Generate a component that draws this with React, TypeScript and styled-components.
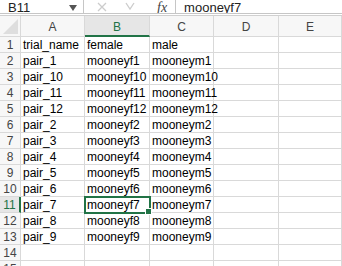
import React from "react"
import styled, { createGlobalStyle } from "styled-components"

const green = "#217346"
const grid = "#d9d9d9"
const font = '"Liberation Sans", Arial, sans-serif'

const Global = createGlobalStyle`
  html, body { margin: 0; padding: 0; background: #fff; }
  body { font-family: ${font}; overflow: hidden; }
`

const Page = styled.div`
  width: 342px;
  height: 266px;
  overflow: hidden;
  background: #fff;
`

// formula bar
const FormulaBar = styled.div`
  display: flex;
  align-items: center;
  height: 13px;
  border-bottom: 1px solid #c6c6c6;
  overflow: hidden;
`
const NameBox = styled.div`
  width: 84px;
  height: 100%;
  display: flex;
  align-items: flex-end;
  justify-content: space-between;
  padding: 0 6px 0 8px;
  box-sizing: border-box;
  border-right: 1px solid #c6c6c6;
  font-size: 13px;
  color: #222;
  line-height: 10px;
`
const Arrow = styled.span`
  width: 0;
  height: 0;
  border-left: 4px solid transparent;
  border-right: 4px solid transparent;
  border-top: 6px solid #555;
  margin-bottom: 2px;
`
const Tools = styled.div`
  display: flex;
  align-items: center;
  padding: 0 8px 0 13px;
  height: 100%;
  border-right: 1px solid #c6c6c6;
`
const ToolIcon = styled.span<{ $gap?: number }>`
  display: flex;
  margin-left: ${(p) => p.$gap ?? 0}px;
`
const Fx = styled.span`
  margin-left: 22px;
  font-family: "Liberation Serif", serif;
  font-style: italic;
  font-size: 14px;
  color: #444;
  line-height: 10px;
  align-self: flex-end;
`
const FormulaText = styled.div`
  padding-left: 8px;
  font-size: 13px;
  line-height: 10px;
  color: #222;
  align-self: flex-end;
`
const Spacer = styled.div`
  height: 1px;
  border-bottom: 1px solid #d0d0d0;
`

// sheet
const Sheet = styled.div`
  display: grid;
  grid-template-columns: 21px 64px 65px 64px 65px 1fr;
  grid-template-rows: 21px;
  grid-auto-rows: 16px;
`
const Corner = styled.div`
  position: relative;
  background: #f7f7f7;
  border-right: 1px solid ${grid};
  border-bottom: 1px solid ${grid};
  overflow: hidden;
  &::after {
    content: "";
    position: absolute;
    right: 2px;
    bottom: 2px;
    border-left: 15px solid transparent;
    border-bottom: 15px solid #dedede;
  }
`
const ColHead = styled.div<{ $active?: boolean }>`
  display: flex;
  align-items: center;
  justify-content: center;
  font-size: 12px;
  padding-top: 2px;
  background: ${(p) => (p.$active ? "#e6e6e6" : "#f7f7f7")};
  color: ${(p) => (p.$active ? green : "#444")};
  border-right: 1px solid ${grid};
  border-bottom: ${(p) => (p.$active ? `2px solid ${green}` : `1px solid ${grid}`)};
`
const RowHead = styled.div<{ $active?: boolean }>`
  display: flex;
  align-items: center;
  justify-content: center;
  font-size: 12px;
  background: ${(p) => (p.$active ? "#e6e6e6" : "#f7f7f7")};
  color: ${(p) => (p.$active ? green : "#444")};
  border-right: ${(p) => (p.$active ? `2px solid ${green}` : `1px solid ${grid}`)};
  border-bottom: 1px solid ${grid};
`
const Cell = styled.div<{ $selected?: boolean }>`
  position: relative;
  display: flex;
  align-items: center;
  padding-left: 2px;
  font-size: 12px;
  color: #000;
  white-space: nowrap;
  overflow: visible;
  border-right: 1px solid ${grid};
  border-bottom: 1px solid ${grid};
  ${(p) =>
    p.$selected &&
    `
    outline: 2px solid ${green};
    outline-offset: -1px;
    z-index: 1;
    &::after {
      content: "";
      position: absolute;
      right: -3px;
      bottom: -3px;
      width: 5px;
      height: 5px;
      background: ${green};
      border: 1px solid #fff;
    }
  `}
`

const cols = ["A", "B", "C", "D", "E"]
const data: string[][] = [
  ["trial_name", "female", "male"],
  ["pair_1", "mooneyf1", "mooneym1"],
  ["pair_10", "mooneyf10", "mooneym10"],
  ["pair_11", "mooneyf11", "mooneym11"],
  ["pair_12", "mooneyf12", "mooneym12"],
  ["pair_2", "mooneyf2", "mooneym2"],
  ["pair_3", "mooneyf3", "mooneym3"],
  ["pair_4", "mooneyf4", "mooneym4"],
  ["pair_5", "mooneyf5", "mooneym5"],
  ["pair_6", "mooneyf6", "mooneym6"],
  ["pair_7", "mooneyf7", "mooneym7"],
  ["pair_8", "mooneyf8", "mooneym8"],
  ["pair_9", "mooneyf9", "mooneym9"],
  ["", "", ""],
  ["", "", ""],
]

const IconX = () => (
  <svg width="10" height="10" viewBox="0 0 10 10">
    <path d="M1 1L9 9M9 1L1 9" stroke="#cccccc" strokeWidth="1.3" />
  </svg>
)
const IconCheck = () => (
  <svg width="10" height="9" viewBox="0 0 10 9">
    <path d="M1 1L5 7L9 1" stroke="#cccccc" strokeWidth="1.3" fill="none" />
  </svg>
)

export default function App() {
  return (
    <Page>
      <Global />
      <FormulaBar>
        <NameBox>
          B11
          <Arrow />
        </NameBox>
        <Tools>
          <ToolIcon>
            <IconX />
          </ToolIcon>
          <ToolIcon $gap={18}>
            <IconCheck />
          </ToolIcon>
          <Fx>fx</Fx>
        </Tools>
        <FormulaText>mooneyf7</FormulaText>
      </FormulaBar>
      <Spacer />
      <Sheet>
        <Corner />
        {cols.map((c) => (
          <ColHead key={c} $active={c === "B"}>
            {c}
          </ColHead>
        ))}
        {data.map((row, i) => (
          <React.Fragment key={i}>
            <RowHead $active={i === 10}>{i + 1}</RowHead>
            {row.map((v, j) => (
              <Cell key={j} $selected={i === 10 && j === 1}>
                {v}
              </Cell>
            ))}
            <Cell />
            <Cell />
          </React.Fragment>
        ))}
      </Sheet>
    </Page>
  )
}
